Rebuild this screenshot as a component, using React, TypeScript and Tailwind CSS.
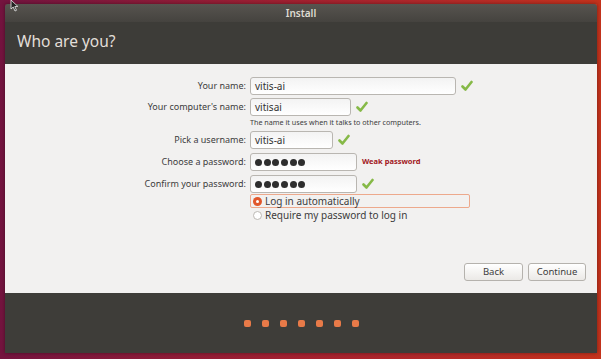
import React from "react";

function Check() {
  return (
    <svg width="12" height="12" viewBox="0 0 12 12" className="shrink-0">
      <path
        d="M1.5 6.5 L4.5 9.5 L10.5 2"
        fill="none"
        stroke="#86b947"
        strokeWidth="2.6"
        strokeLinecap="round"
        strokeLinejoin="round"
      />
    </svg>
  );
}

function Dots() {
  return (
    <span className="flex gap-[1.7px]">
      {[0, 1, 2, 3, 4, 5].map((i) => (
        <span key={i} className="w-[7px] h-[7px] rounded-full bg-[#2e2e2e]" />
      ))}
    </span>
  );
}

function Field({
  label,
  width,
  children,
  extra,
}: {
  label: string;
  width: string;
  children: React.ReactNode;
  extra?: React.ReactNode;
}) {
  return (
    <div className="flex items-center h-[18px]">
      <div className="w-[245px] pr-[4px] text-right text-[9px] text-[#3c3c3c]">{label}</div>
      <div
        className={`${width} h-[18px] bg-gradient-to-b from-[#f3f3f3] to-white border border-[#b9b6b1] rounded-[3px] flex items-center pl-[4px] text-[10px] text-[#333]`}
      >
        {children}
      </div>
      <div className="ml-[5px] flex items-center">{extra}</div>
    </div>
  );
}

export default function App() {
  return (
    <div
      className="w-[601px] h-[359px] relative overflow-hidden bg-gradient-to-r from-[#74143f] via-[#a32130] to-[#c5331c] pt-[4px] pl-[5px] pr-[4px] pb-[6px]"
      style={{ fontFamily: '"Noto Sans", "Open Sans", sans-serif' }}
    >
      <svg width="9" height="12" viewBox="0 0 9 12" className="absolute left-[10px] top-0 z-10">
        <path d="M1 0 L1 9 L3.2 7 L5 11 L6.5 10.3 L4.8 6.6 L7.8 6.4 Z" fill="#222" stroke="#eee" strokeWidth="0.8" />
      </svg>
      <div className="w-full h-full flex flex-col shadow-[0_0_4px_rgba(0,0,0,0.4)]">
        <div className="h-[18px] bg-gradient-to-b from-[#57544f] to-[#45433f] rounded-t-[3px] flex items-center justify-center text-[10px] font-semibold text-[#dfdbd2]">
          Install
        </div>
        <div className="h-[42px] bg-[#3d3c38] flex items-center pl-[12px] pb-[2px] text-[15.5px] text-[#e3dfd8]">
          Who are you?
        </div>
        <div className="flex-1 bg-[#f2f1f0] flex flex-col pt-[13px] pr-[11px] pb-[12px]">
          <Field label="Your name:" width="w-[206px]" extra={<Check />}>
            vitis-ai
          </Field>
          <div className="mt-[3px]">
            <Field label="Your computer's name:" width="w-[101px]" extra={<Check />}>
              vitisai
            </Field>
          </div>
          <div className="pl-[245px] text-[7.2px] text-[#3c3c3c] h-[12px] leading-[12px]">
            The name it uses when it talks to other computers.
          </div>
          <div className="mt-[3px]">
            <Field label="Pick a username:" width="w-[83px]" extra={<Check />}>
              vitis-ai
            </Field>
          </div>
          <div className="mt-[4px]">
            <Field
              label="Choose a password:"
              width="w-[107px]"
              extra={<span className="text-[7.5px] font-bold text-[#a1171c]">Weak password</span>}
            >
              <Dots />
            </Field>
          </div>
          <div className="mt-[4px]">
            <Field label="Confirm your password:" width="w-[107px]" extra={<Check />}>
              <Dots />
            </Field>
          </div>
          <div className="ml-[245px] mt-[1px] w-[220px] h-[14px] border border-[#eda98c] rounded-[2px] flex items-center gap-[3px] pl-[2px] text-[10px] text-[#3c3c3c]">
            <span className="w-[9px] h-[9px] rounded-full bg-[#e1572b] flex items-center justify-center">
              <span className="w-[3px] h-[3px] rounded-full bg-white" />
            </span>
            Log in automatically
          </div>
          <div className="ml-[245px] mt-[1px] h-[13px] flex items-center gap-[3px] pl-[3px] text-[10px] text-[#3c3c3c]">
            <span className="w-[9px] h-[9px] rounded-full border border-[#bdbab5] bg-white" />
            Require my password to log in
          </div>
          <div className="mt-auto flex justify-end gap-[5px]">
            <button className="w-[59px] h-[18px] rounded-[3px] border border-[#b5b2ad] bg-gradient-to-b from-white to-[#ebe9e6] text-[9.5px] text-[#3c3c3c]">
              Back
            </button>
            <button className="w-[58px] h-[18px] rounded-[3px] border border-[#b5b2ad] bg-gradient-to-b from-white to-[#ebe9e6] text-[9.5px] text-[#3c3c3c]">
              Continue
            </button>
          </div>
        </div>
        <div className="h-[60px] bg-[#3e3d39] flex items-center justify-center gap-[11px] pt-[1px]">
          {[0, 1, 2, 3, 4, 5, 6].map((i) => (
            <span key={i} className="w-[7px] h-[7px] rounded-[2px] bg-[#e87a48]" />
          ))}
        </div>
      </div>
    </div>
  );
}
